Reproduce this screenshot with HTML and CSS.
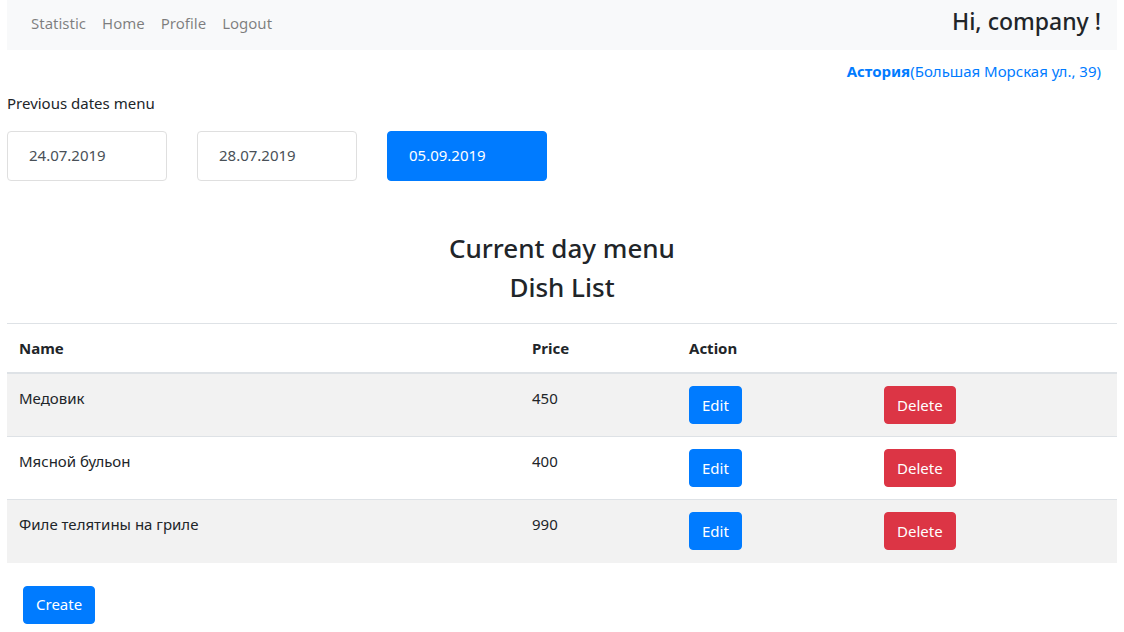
FILE: index.html
```html
<!DOCTYPE html>
<html lang="en">
<head>
<meta charset="utf-8">
<title>Menu</title>
<link rel="stylesheet" href="styles.css">
</head>
<body>
<div class="page">
  <nav class="navbar">
    <ul class="nav-links">
      <li><a class="nav-link" href="#">Statistic</a></li>
      <li><a class="nav-link" href="#">Home</a></li>
      <li><a class="nav-link" href="#">Profile</a></li>
      <li><a class="nav-link" href="#">Logout</a></li>
    </ul>
    <div class="greeting">Hi, company !</div>
  </nav>

  <div class="restaurant"><a href="#"><b>Астория</b>(Большая Морская ул., 39)</a></div>

  <p class="prev-label">Previous dates menu</p>
  <div class="dates">
    <a class="date" href="#">24.07.2019</a>
    <a class="date" href="#">28.07.2019</a>
    <a class="date active" href="#">05.09.2019</a>
  </div>

  <h3 class="title">Current day menu</h3>
  <h3 class="title">Dish List</h3>

  <table class="dishes">
    <thead>
      <tr><th class="c-name">Name</th><th class="c-price">Price</th><th class="c-edit">Action</th><th class="c-del"></th></tr>
    </thead>
    <tbody>
      <tr><td class="txt">Медовик</td><td class="txt">450</td><td><button class="btn btn-primary">Edit</button></td><td><button class="btn btn-danger">Delete</button></td></tr>
      <tr><td class="txt">Мясной бульон</td><td class="txt">400</td><td><button class="btn btn-primary">Edit</button></td><td><button class="btn btn-danger">Delete</button></td></tr>
      <tr><td class="txt">Филе телятины на гриле</td><td class="txt">990</td><td><button class="btn btn-primary">Edit</button></td><td><button class="btn btn-danger">Delete</button></td></tr>
    </tbody>
  </table>

  <div class="create-wrap"><button class="btn btn-primary">Create</button></div>
</div>
</body>
</html>
```
FILE: styles.css
```css
* { box-sizing: border-box; }
html, body { margin: 0; padding: 0; background: #fff; }
body {
  font-family: "Segoe UI", "Noto Sans", "Open Sans", sans-serif;
  font-size: 15px;
  line-height: 1.5;
  color: #212529;
}
.page { padding: 0 7px; }
a { text-decoration: none; }

.navbar {
  display: flex;
  align-items: flex-start;
  justify-content: space-between;
  height: 50px;
  padding: 4px 16px 0;
  background: #f8f9fa;
}
.nav-links { display: flex; list-style: none; margin: 0; padding: 0; }
.nav-link { display: block; padding: 8px 8px; color: rgba(0,0,0,.5); }
.greeting { font-size: 23px; font-weight: 500; color: #212529; }

.restaurant { text-align: right; padding: 10px 16px 0 0; height: 42px; }
.restaurant a { color: #007bff; }
.restaurant b { font-weight: 700; }

.prev-label { margin: 0 0 16px; }
.dates { display: flex; gap: 30px; margin-bottom: 50px; }
.date {
  display: flex;
  align-items: center;
  width: 160px;
  height: 50px;
  padding: 0 21px;
  border: 1px solid #dfdfdf;
  border-radius: 4px;
  color: #495057;
}
.date.active { background: #007bff; border-color: #007bff; color: #fff; }

.title {
  margin: 0 0 5px;
  text-align: center;
  font-size: 26px;
  font-weight: 500;
  line-height: 34px;
}
.title + .title { margin-bottom: 19px; }

.dishes { width: 100%; border-collapse: collapse; }
.dishes th, .dishes td { padding: 12px; text-align: left; vertical-align: top; }
.dishes th { border-top: 1px solid #dee2e6; border-bottom: 2px solid #dee2e6; font-weight: 700; padding-top: 13px; padding-bottom: 13px; }
.dishes td { border-top: 1px solid #dee2e6; height: 63px; }
.dishes td.txt { padding-top: 13px; }
.dishes tbody tr:nth-child(odd) { background: #f2f2f2; }
.c-name { width: 513px; }
.c-price { width: 157px; }
.c-edit { width: 195px; }

.btn {
  font: inherit;
  font-size: 15px;
  height: 38px;
  padding: 0 12px;
  border: 1px solid transparent;
  border-radius: 4px;
  color: #fff;
  cursor: pointer;
}
.btn-primary { background: #007bff; border-color: #007bff; }
.btn-danger { background: #dc3545; border-color: #dc3545; }
.create-wrap { padding: 23px 16px 24px; }
```
